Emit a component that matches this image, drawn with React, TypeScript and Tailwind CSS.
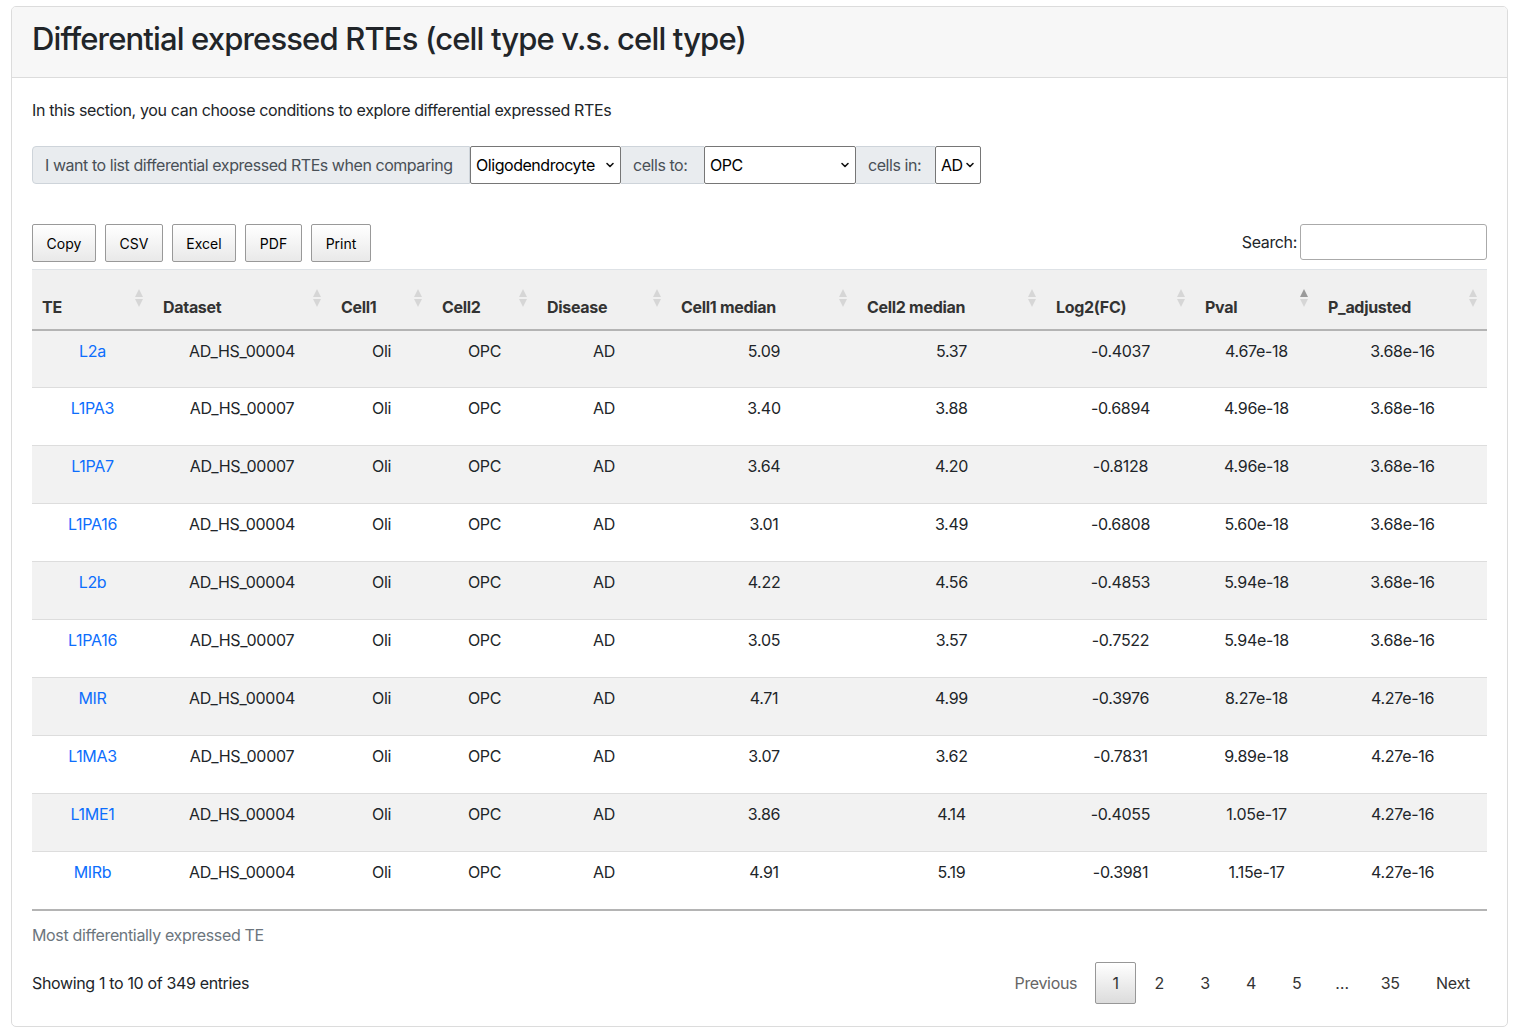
import React from 'react'

const rows = [
    ['L2a', 'AD_HS_00004', '5.09', '5.37', '-0.4037', '4.67e-18', '3.68e-16'],
    ['L1PA3', 'AD_HS_00007', '3.40', '3.88', '-0.6894', '4.96e-18', '3.68e-16'],
    ['L1PA7', 'AD_HS_00007', '3.64', '4.20', '-0.8128', '4.96e-18', '3.68e-16'],
    ['L1PA16', 'AD_HS_00004', '3.01', '3.49', '-0.6808', '5.60e-18', '3.68e-16'],
    ['L2b', 'AD_HS_00004', '4.22', '4.56', '-0.4853', '5.94e-18', '3.68e-16'],
    ['L1PA16', 'AD_HS_00007', '3.05', '3.57', '-0.7522', '5.94e-18', '3.68e-16'],
    ['MIR', 'AD_HS_00004', '4.71', '4.99', '-0.3976', '8.27e-18', '4.27e-16'],
    ['L1MA3', 'AD_HS_00007', '3.07', '3.62', '-0.7831', '9.89e-18', '4.27e-16'],
    ['L1ME1', 'AD_HS_00004', '3.86', '4.14', '-0.4055', '1.05e-17', '4.27e-16'],
    ['MIRb', 'AD_HS_00004', '4.91', '5.19', '-0.3981', '1.15e-17', '4.27e-16'],
]

const columns = [
    { name: 'TE', width: 121 },
    { name: 'Dataset', width: 178 },
    { name: 'Cell1', width: 101 },
    { name: 'Cell2', width: 105 },
    { name: 'Disease', width: 134 },
    { name: 'Cell1 median', width: 186 },
    { name: 'Cell2 median', width: 189 },
    { name: 'Log2(FC)', width: 149 },
    { name: 'Pval', width: 123, sorted: true },
    { name: 'P_adjusted', width: 169 },
]

function SortIcon({ active }: { active?: boolean }) {
    return (
        <svg width="8" height="18" viewBox="0 0 8 18" className="absolute right-[10px] top-[19px]">
            <path d="M4 0 L8 8 L0 8 Z" fill={active ? '#9a9a9a' : '#d6d6d6'} />
            <path d="M4 18 L8 10 L0 10 Z" fill="#d6d6d6" />
        </svg>
    )
}

function Chevron() {
    return (
        <svg width="10" height="10" viewBox="0 0 10 10" className="shrink-0">
            <path d="M2 3.5 L5 6.5 L8 3.5" fill="none" stroke="#111" strokeWidth="1.6" strokeLinecap="round" strokeLinejoin="round" />
        </svg>
    )
}

function FakeSelect({ value, width }: { value: string; width: string }) {
    return (
        <div className={`shrink-0 flex items-center justify-between bg-white border border-[#767676] rounded-[2px] pl-[5px] pr-[5px] text-[16px] text-black whitespace-nowrap ${width}`}>
            <span>{value}</span>
            <Chevron />
        </div>
    )
}

function ToolButton({ label, width }: { label: string; width: string }) {
    return (
        <button className={`h-[38px] ${width} border border-[#999] rounded-[2px] bg-gradient-to-b from-white to-[#e9e9e9] text-[14px] text-black`}>
            {label}
        </button>
    )
}

export default function App() {
    return (
        <div className="min-h-[1036px] bg-white pl-[11px] pr-[9px] pt-[6px] pb-[9px] text-[#212529]" style={{ fontFamily: 'Inter, "Liberation Sans", sans-serif' }}>
            <div className="border border-[#dcdcdc] rounded-[5px] overflow-hidden">
                {/* Card Header */}
                <div className="h-[71px] bg-[#f7f7f7] border-b border-[#dcdcdc] px-[20px] flex items-center pb-[5px]">
                    <h1 className="text-[31px] font-medium tracking-[-0.85px] text-[#212529]">
                        Differential expressed RTEs (cell type v.s. cell type)
                    </h1>
                </div>

                {/* Card Body */}
                <div className="px-[20px] pt-[20px] pb-[22px]">
                    <p className="text-[16px] leading-[24px] tracking-[-0.35px]">
                        In this section, you can choose conditions to explore differential expressed RTEs
                    </p>

                    {/* Condition selector */}
                    <div className="mt-[24px] flex h-[38px] text-[16px] tracking-[-0.45px] whitespace-nowrap">
                        <div className="shrink-0 flex items-center px-[12px] bg-[#e9ecef] border border-[#ced4da] rounded-l-[4px] text-[#495057] w-[438px]">
                            I want to list differential expressed RTEs when comparing
                        </div>
                        <FakeSelect value="Oligodendrocyte" width="w-[151px]" />
                        <div className="shrink-0 flex items-center px-[12px] bg-[#e9ecef] border-y border-[#ced4da] text-[#495057] w-[83px]">
                            cells to:
                        </div>
                        <FakeSelect value="OPC" width="w-[152px]" />
                        <div className="shrink-0 flex items-center px-[12px] bg-[#e9ecef] border-y border-[#ced4da] text-[#495057] w-[79px]">
                            cells in:
                        </div>
                        <FakeSelect value="AD" width="w-[46px]" />
                    </div>

                    {/* Toolbar */}
                    <div className="mt-[40px] flex items-start justify-between">
                        <div className="flex gap-[9px]">
                            <ToolButton label="Copy" width="w-[64px]" />
                            <ToolButton label="CSV" width="w-[58px]" />
                            <ToolButton label="Excel" width="w-[64px]" />
                            <ToolButton label="PDF" width="w-[57px]" />
                            <ToolButton label="Print" width="w-[60px]" />
                        </div>
                        <label className="flex items-center gap-[3px] text-[16px] tracking-[-0.35px]">
                            Search:
                            <input className="h-[36px] w-[187px] border border-[#aaa] rounded-[3px] bg-white" />
                        </label>
                    </div>

                    {/* Table */}
                    <table className="mt-[7px] w-full table-fixed border-collapse text-[16px] tracking-[-0.3px]">
                        <colgroup>
                            {columns.map((c) => (
                                <col key={c.name} style={{ width: c.width }} />
                            ))}
                        </colgroup>
                        <thead>
                            <tr className="h-[60px] bg-[#f0f0f0] border-t border-[#dee2e6] border-b-2 border-b-[#b4b4b4]">
                                {columns.map((c) => (
                                    <th key={c.name} className="relative align-bottom text-left font-bold text-[#333] px-[10px] pb-[10px]">
                                        {c.name}
                                        <SortIcon active={c.sorted} />
                                    </th>
                                ))}
                            </tr>
                        </thead>
                        <tbody>
                            {rows.map((r, i) => (
                                <tr key={i} className={`h-[58px] border-b border-[#dddddd] ${i % 2 === 0 ? 'bg-[#f2f2f2]' : 'bg-white'} ${i === rows.length - 1 ? 'border-b-2 border-b-[#b4b4b4]' : ''}`}>
                                    <td className="align-top text-center pt-[8px] text-[#0d6efd]">{r[0]}</td>
                                    <td className="align-top text-center pt-[8px]">{r[1]}</td>
                                    <td className="align-top text-center pt-[8px]">Oli</td>
                                    <td className="align-top text-center pt-[8px]">OPC</td>
                                    <td className="align-top text-center pt-[8px]">AD</td>
                                    <td className="align-top text-center pt-[8px]">{r[2]}</td>
                                    <td className="align-top text-center pt-[8px]">{r[3]}</td>
                                    <td className="align-top text-center pt-[8px]">{r[4]}</td>
                                    <td className="align-top text-center pt-[8px]">{r[5]}</td>
                                    <td className="align-top text-center pt-[8px]">{r[6]}</td>
                                </tr>
                            ))}
                        </tbody>
                    </table>

                    <p className="mt-[12px] text-[16px] text-[#6c757d] tracking-[-0.35px]">Most differentially expressed TE</p>

                    {/* Footer */}
                    <div className="mt-[15px] flex items-center justify-between text-[16px] tracking-[-0.35px]">
                        <div>Showing 1 to 10 of 349 entries</div>
                        <div className="flex items-center text-[#333]">
                            <span className="px-[18px] text-[#666]">Previous</span>
                            <span className="h-[42px] w-[41px] flex items-center justify-center border border-[#979797] rounded-[2px] bg-gradient-to-b from-white to-[#dcdcdc]">1</span>
                            <span className="w-[46px] text-center">2</span>
                            <span className="w-[46px] text-center">3</span>
                            <span className="w-[46px] text-center">4</span>
                            <span className="w-[45px] text-center">5</span>
                            <span className="w-[46px] text-center">…</span>
                            <span className="w-[50px] text-center">35</span>
                            <span className="pl-[21px] pr-[17px]">Next</span>
                        </div>
                    </div>
                </div>
            </div>
        </div>
    )
}
